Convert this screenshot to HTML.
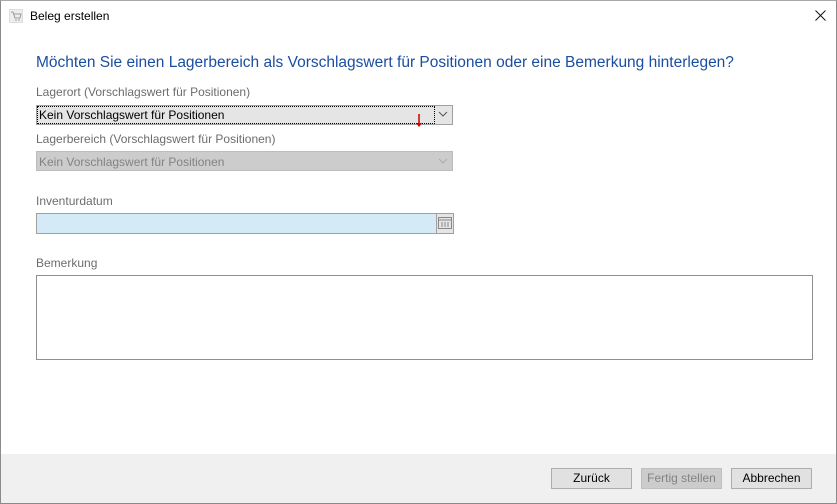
<!DOCTYPE html>
<html><head><style>
*{margin:0;padding:0;box-sizing:border-box}
body{width:837px;height:504px;position:relative;background:#fff;font-family:"Liberation Sans",sans-serif;overflow:hidden}
.win{position:absolute;left:0;top:0;width:837px;height:504px;border:1px solid #8a8a8a;border-top-color:#aaa}
.abs{position:absolute}
.lbl{position:absolute;left:36px;font-size:12px;color:#6d6d6d}
.btn{position:absolute;top:468px;width:81px;height:21px;border:1px solid #adadad;background:#e1e1e1;font-size:12px;text-align:center;line-height:19px;color:#000}
</style></head><body>
<div class="win"></div>
<svg class="abs" style="left:9px;top:9px" width="14" height="14" viewBox="0 0 14 14"><rect x="0.5" y="0.5" width="13" height="13" fill="#eee" stroke="#ddd"/><path d="M2 3h2l2 6h5l1-4H5" fill="none" stroke="#999" stroke-width="1"/><circle cx="7" cy="11" r="0.8" fill="#999"/><circle cx="10" cy="11" r="0.8" fill="#999"/></svg>
<div class="abs" style="left:30px;top:9px;font-size:12px;color:#000">Beleg erstellen</div>
<svg class="abs" style="left:815px;top:10px" width="11" height="11"><path d="M0.5 0.5l10 10M10.5 0.5l-10 10" stroke="#111" stroke-width="1"/></svg>
<div class="abs" style="left:36px;top:54px;font-size:15.5px;color:#1b4ea0;white-space:nowrap">Möchten Sie einen Lagerbereich als Vorschlagswert für Positionen oder eine Bemerkung hinterlegen?</div>
<div class="lbl" style="top:85px">Lagerort (Vorschlagswert für Positionen)</div>
<div class="abs" style="left:36px;top:105px;width:417px;height:20px;border:1px solid #a0a0a0;background:#e5e5e5"></div>
<div class="abs" style="left:37px;top:106px;width:398px;height:18px;border:1px dotted #000"></div>
<div class="abs" style="left:39px;top:108px;font-size:12px;color:#000">Kein Vorschlagswert für Positionen</div>
<svg class="abs" style="left:438px;top:111px" width="10" height="7"><path d="M1 1l4 4 4-4" fill="none" stroke="#555"/></svg>
<svg class="abs" style="left:415px;top:114px" width="8" height="16"><path d="M4 0v11" stroke="#c00" stroke-width="1.5"/><path d="M1 9l3 4 3-4z" fill="#c00"/></svg>
<div class="lbl" style="top:132px">Lagerbereich (Vorschlagswert für Positionen)</div>
<div class="abs" style="left:36px;top:151px;width:417px;height:20px;border:1px solid #bcbcbc;background:#cccccc"></div>
<div class="abs" style="left:39px;top:155px;font-size:12px;color:#838383">Kein Vorschlagswert für Positionen</div>
<svg class="abs" style="left:438px;top:158px" width="10" height="7"><path d="M1 1l4 4 4-4" fill="none" stroke="#aaa"/></svg>
<div class="lbl" style="top:194px">Inventurdatum</div>
<div class="abs" style="left:36px;top:213px;width:418px;height:21px;border:1px solid #a0a0a0;background:#d5eaf7"></div>
<div class="abs" style="left:436px;top:213px;width:18px;height:21px;border:1px solid #a0a0a0;background:#e5e5e5"></div>
<svg class="abs" style="left:438px;top:216px" width="14" height="14"><rect x="0.5" y="1.5" width="13" height="11" fill="none" stroke="#888"/><path d="M1 4h12M4 6v5M7 6v5M10 6v5" stroke="#888"/></svg>
<div class="lbl" style="top:256px">Bemerkung</div>
<div class="abs" style="left:36px;top:275px;width:777px;height:85px;border:1px solid #8f8f8f;background:#fff"></div>
<div class="abs" style="left:1px;top:454px;width:835px;height:49px;background:#f0f0f0"></div>
<div class="btn" style="left:551px">Zurück</div>
<div class="btn" style="left:641px;background:#cccccc;border-color:#bfbfbf;color:#838383">Fertig stellen</div>
<div class="btn" style="left:731px">Abbrechen</div>
</body></html>
